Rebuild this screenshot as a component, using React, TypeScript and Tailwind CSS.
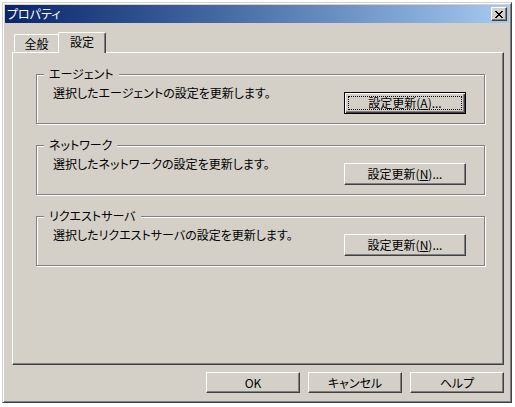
import clsx from 'clsx';
import { ReactNode } from 'react';

const GROUPS = [
    { label: 'エージェント', desc: '選択したエージェントの設定を更新します。', key: 'A', def: true },
    { label: 'ネットワーク', desc: '選択したネットワークの設定を更新します。', key: 'N', def: false },
    { label: 'リクエストサーバ', desc: '選択したリクエストサーバの設定を更新します。', key: 'N', def: false },
];

const CloseGlyph = () => (
    <svg width="8" height="7" viewBox="0 0 8 7" shapeRendering="crispEdges">
        <path
            fill="#000"
            d="M0 0h2v1H0zM6 0h2v1H6zM1 1h2v1H1zM5 1h2v1H5zM2 2h4v1H2zM3 3h2v1H3zM2 4h4v1H2zM1 5h2v1H1zM5 5h2v1H5zM0 6h2v1H0zM6 6h2v1H6z"
        />
    </svg>
);

const Button = ({ children, className, def }: { children: ReactNode; className?: string; def?: boolean }) => (
    <button
        className={clsx(
            'flex bg-[#d4d0c8] text-black',
            def
                ? 'border border-black p-[3px] shadow-[inset_1px_1px_0_#fff,inset_-1px_-1px_0_#404040,inset_-2px_-2px_0_#808080]'
                : 'border border-t-white border-l-white border-r-[#404040] border-b-[#404040] p-[2px] shadow-[inset_-1px_-1px_0_#808080]',
            className
        )}
    >
        <span
            className={clsx(
                'flex flex-1 items-center justify-center leading-[14px]',
                def ? 'border border-dotted border-black' : 'border border-transparent'
            )}
        >
            {children}
        </span>
    </button>
);

export default function App() {
    return (
        <div className="w-[515px] h-[407px] bg-white pt-[2px] pl-[2px] font-['Noto_Sans_CJK_JP',sans-serif] text-[12px] text-black [font-feature-settings:'palt']">
            <div className="w-[510px] h-[401px] flex flex-col bg-[#d4d0c8] border border-t-[#d4d0c8] border-l-[#d4d0c8] border-r-[#404040] border-b-[#404040] p-[2px] shadow-[inset_1px_1px_0_#fff,inset_-1px_-1px_0_#808080]">
                {/* title bar */}
                <div className="h-[18px] flex items-center justify-between bg-gradient-to-r from-[#0a246a] to-[#a6caf0] pl-[2px] pr-[2px]">
                    <span className="text-white leading-[14px]">プロパティ</span>
                    <div className="w-[16px] h-[14px] flex items-center justify-center bg-[#d4d0c8] border border-t-white border-l-white border-r-[#404040] border-b-[#404040] shadow-[inset_-1px_-1px_0_#808080]">
                        <CloseGlyph />
                    </div>
                </div>

                <div className="mt-[9px] ml-[7px] w-[492px] flex flex-col">
                    {/* tabs */}
                    <div className="h-[20px] flex items-end pl-[2px]">
                        <div className="w-[44px] h-[18px] flex items-center justify-center border-t border-l border-white rounded-tl-[2px] leading-[14px]">
                            全般
                        </div>
                        <div className="relative z-10 -mb-px w-[48px] h-[21px] flex items-center justify-center pb-[2px] bg-[#d4d0c8] border-t border-l border-white border-r border-r-[#404040] rounded-t-[2px] shadow-[inset_-1px_0_0_#808080] leading-[14px]">
                            設定
                        </div>
                    </div>

                    {/* panel */}
                    <div className="h-[313px] flex flex-col gap-[21px] pt-[21px] pl-[23px] border-t border-l border-white border-r border-b border-r-[#404040] border-b-[#404040] shadow-[inset_-1px_-1px_0_#808080]">
                        {GROUPS.map((g) => (
                            <div
                                key={g.label}
                                className="relative w-[449px] h-[50px] flex items-start justify-between pt-[11px] pl-[16px] pr-[18px] border border-[#808080] shadow-[inset_1px_1px_0_#fff,1px_1px_0_#fff]"
                            >
                                <span className="absolute left-[7px] -top-[8px] px-[5px] bg-[#d4d0c8] leading-[14px]">{g.label}</span>
                                <span className="leading-[14px]">{g.desc}</span>
                                <Button def={g.def} className="mt-[6px] w-[122px] h-[22px]">
                                    設定更新(<u>{g.key}</u>)...
                                </Button>
                            </div>
                        ))}
                    </div>
                </div>

                {/* footer buttons */}
                <div className="mt-[7px] mr-[5px] flex justify-end gap-[8px]">
                    <Button className="w-[94px] h-[21px]">OK</Button>
                    <Button className="w-[94px] h-[21px]">キャンセル</Button>
                    <Button className="w-[94px] h-[21px]">ヘルプ</Button>
                </div>
            </div>
        </div>
    );
}
